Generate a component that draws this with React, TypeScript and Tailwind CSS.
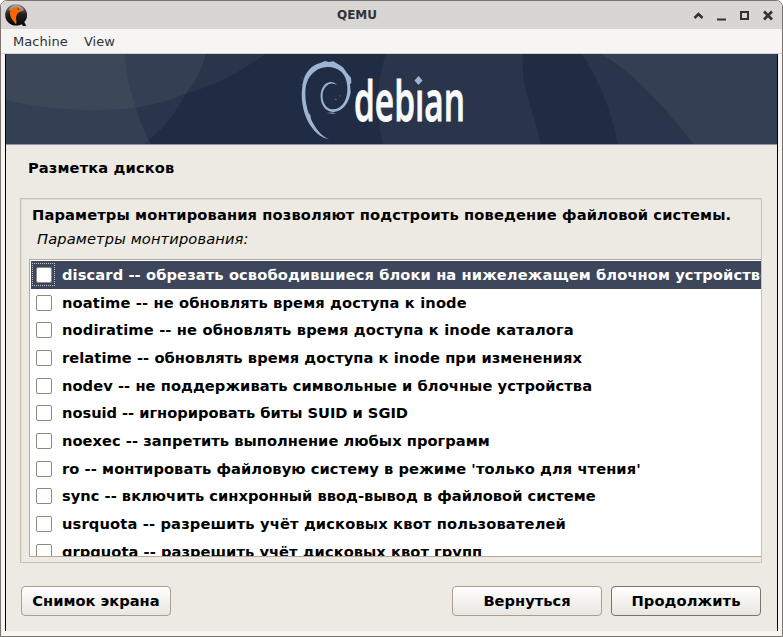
import type { ReactNode } from 'react';

const options: { label: string; spacing: string; selected?: boolean }[] = [
  { label: 'discard -- обрезать освободившиеся блоки на нижележащем блочном устройстве', spacing: 'tracking-[0.100px]', selected: true },
  { label: 'noatime -- не обновлять время доступа к inode', spacing: 'tracking-[0.130px]' },
  { label: 'nodiratime -- не обновлять время доступа к inode каталога', spacing: 'tracking-[0.150px]' },
  { label: 'relatime -- обновлять время доступа к inode при изменениях', spacing: 'tracking-[0.060px]' },
  { label: 'nodev -- не поддерживать символьные и блочные устройства', spacing: 'tracking-[0.060px]' },
  { label: 'nosuid -- игнорировать биты SUID и SGID', spacing: 'tracking-[-0.030px]' },
  { label: 'noexec -- запретить выполнение любых программ', spacing: 'tracking-[0.035px]' },
  { label: "ro -- монтировать файловую систему в режиме 'только для чтения'", spacing: 'tracking-[0.070px]' },
  { label: 'sync -- включить синхронный ввод-вывод в файловой системе', spacing: 'tracking-[0.010px]' },
  { label: 'usrquota -- разрешить учёт дисковых квот пользователей', spacing: 'tracking-[0.150px]' },
  { label: 'grpquota -- разрешить учёт дисковых квот групп', spacing: 'tracking-[0.040px]' },
];

function QemuIcon() {
  return (
    <svg className="size-[23px]" viewBox="0 0 23 23">
      <defs>
        <linearGradient id="shine" x1="0" y1="0" x2="0" y2="1">
          <stop offset="0" stopColor="#888" />
          <stop offset="0.45" stopColor="#222" />
          <stop offset="1" stopColor="#050505" />
        </linearGradient>
      </defs>
      <path d="M11 .3C4.800 .3.200 5 .200 11S5 21.600 11 21.600c2.300 0 4.200-.5 5.800-1.400l1.200 1.700h3.200l-1.900-3.800c1.800-1.900 2.800-4.300 2.800-7.100C22.100 5 17.200.3 11 .3z" fill="url(#shine)" />
      <path d="M3.500 6C5 3 8 1.300 11 1.300c4 0 6.500 2 8 5-4 2-11 2.200-15.500-.3z" fill="#fff" opacity=".35" />
      <path d="M5 9.500C5 6 7.500 3.400 10.500 3.200c1.500-.5 3-.4 4 .5.8.8 1.400 1.900 3.200 3.100-1.800-.2-3.200.5-4.200 1.700-2 2-2.800 4-2.300 7 .3 2 .3 3.300-.2 4.700C9 17.500 5 14 5 9.500z" fill="#f60" />
      <circle cx="13.200" cy="5" r="0.700" fill="#222" />
    </svg>
  );
}

function TitleBar() {
  return (
    <div className="flex h-7 shrink-0 items-center bg-[#d9d5d2] pl-1">
      <QemuIcon />
      <div className="flex-1 pr-[7px] text-center text-[12px] font-bold leading-[29px] text-[#2e3436]">QEMU</div>
      <svg className="mr-[9px] h-[12px] w-[80px]" viewBox="0 0 80 12" fill="none" stroke="#2e3436" strokeWidth="2">
        <path d="M1.500 9l4-4 4 4" strokeWidth="2.600" />
        <path d="M24 10.500h9" />
        <path d="M48 3h7v7h-7z" />
        <path d="M71 2.500l8 8M79 2.500l-8 8" strokeWidth="2.600" />
      </svg>
    </div>
  );
}

function Banner() {
  return (
    <svg className="block h-[90px] w-full shrink-0" viewBox="6 54 771 90" preserveAspectRatio="none">
      <rect x="6" y="54" width="771" height="90" fill="#202b44" />
      <g fill="#f0ffdc" fillOpacity=".05">
        <path d="M6 54h259C235 76 208 88 187 93 152 109 118 110 85 110 56 109 30 106 6 100z" />
        <path d="M6 54h200C200 72 195 83 187 92 175 114 162 131 144 144H6z" />
        <path d="M6 54h119C126 73 129 89 134 101 138 117 144 132 151 144H6z" />
        <path d="M386 54h137C522 66 523 76 525 86 529 106 537 121 540 144H383C376 115 376 83 386 54z" />
        <path d="M582 54h195v90H618C612 112 599 80 582 54z" />
        <path d="M601 54h176v90h-83C668 112 638 75 601 54z" />
      </g>
      <g transform="translate(290 54) scale(.3333)" fill="#9db5d1">
        <path d="M118 256C92 253 67 229 52 199 38 168 31 130 38 90 44 54 64 34 91 27l14-6 12 3 13-2 15 9 14 9 12 17 12 14 1 17-4 2 2 25C178 144 160 172 131 174 110 174 94 157 92 131 90 105 104 85 122 84c8 0 14 3 19 9-10-6-20-6-28 0-13 9-18 27-14 45 4 19 17 29 32 28 23-2 38-22 41-54 2-35-11-62-37-69-15-6-37-5-53 4C57 61 46 86 46 118c0 24 4 43 10 60l5 4 2 13C77 226 94 246 118 256z" />
        <path d="M110 176l20 5 8-2-10-4z M132 134l9 1-3 4z M147 126l4-2v4z M36 74l3-4v5z M34 90h3v5z" opacity=".6" />
      </g>
      <text x="354" y="121" textLength="111" lengthAdjust="spacingAndGlyphs" fontFamily="Open Sans" fontWeight="600" fontSize="56" fill="#fafafa" stroke="#fafafa" strokeWidth=".9">debıan</text>
      <path d="M418.500 76l4 4.500-4 4.500-4-4.500z" fill="#9db5d1" />
    </svg>
  );
}

function Button({ children, strong }: { children: ReactNode; strong?: boolean }) {
  return (
    <button className={`h-[30px] w-[150px] rounded-[4px] border bg-linear-to-b from-white to-[#e9e6e1] text-[14.667px] font-bold leading-[28px] text-black ${strong ? 'border-[#77736d] tracking-[0.100px]' : 'border-[#a99e90]'}`}>
      {children}
    </button>
  );
}

export default function App() {
  return (
    <div className="h-[637px] w-[783px] bg-white font-['DejaVu_Sans',sans-serif]">
      <div className="flex h-full flex-col overflow-hidden rounded-t-[7px] border border-[#79726f] bg-[#f6f5f4]">
        <TitleBar />
        <div className="flex h-[25px] shrink-0 gap-4 border-b border-[#d5d2cf] pl-3 text-[13px] leading-[25px] tracking-[0.070px] text-[#2e3436]">
          <span>Machine</span>
          <span>View</span>
        </div>
        <div className="mx-1 flex h-[577px] shrink-0 flex-col border-x border-black bg-[#edeae3] text-[14.667px] font-bold text-black">
          <Banner />
          <div className="h-px shrink-0 bg-[#8f95a1]" />
          <h1 className="mt-[13px] h-[20px] pl-[22px] leading-[20px] tracking-[0.120px]">Разметка дисков</h1>
          <div className="mt-[20px] ml-[14px] flex h-[365px] w-[742px] shrink-0 flex-col border border-[#cbc1b4] pl-[8px] shadow-[inset_1px_1px_0_#e0dad0]">
            <p className="mt-[6px] h-[20px] pl-[3px] leading-[20px] tracking-[0.130px]">Параметры монтирования позволяют подстроить поведение файловой системы.</p>
            <p className="mt-[4px] h-[20px] pl-[8px] font-normal italic leading-[20px] tracking-[0.120px]">Параметры монтирования:</p>
            <div className="mt-[10px] h-[298px] shrink-0 overflow-hidden border border-r-0 border-[#b4a898] bg-white pt-px pl-px">
              {options.map((o) => (
                <div key={o.label} className={`flex h-[27.700px] items-center pl-px ${o.selected ? 'bg-[#3d465b] text-white' : ''}`}>
                  <span className={`flex size-[23px] shrink-0 items-center justify-center border border-dotted ${o.selected ? 'border-[#bfc5d0]' : 'border-transparent'}`}>
                    <span className="size-[16px] rounded-[2px] border border-[#92897c] bg-white" />
                  </span>
                  <span className={`ml-[7px] whitespace-nowrap leading-[20px] ${o.spacing}`}>{o.label}</span>
                </div>
              ))}
            </div>
          </div>
          <div className="mt-[23px] flex pl-[15px]">
            <Button>Снимок экрана</Button>
            <div className="ml-[281px] flex gap-[9px]">
              <Button>Вернуться</Button>
              <Button strong>Продолжить</Button>
            </div>
          </div>
        </div>
      </div>
    </div>
  );
}
